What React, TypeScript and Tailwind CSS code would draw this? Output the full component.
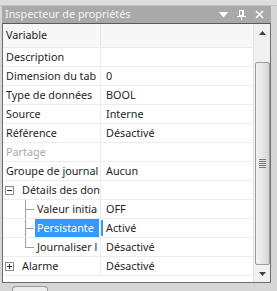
import React from "react";

const font = { fontFamily: '"Noto Sans", "Liberation Sans", sans-serif' };

type Row = {
  label: string;
  value?: string;
  disabled?: boolean;
  kind?: "plain" | "minus" | "plus" | "child" | "childLast";
  selected?: boolean;
};

const rows: Row[] = [
  { label: "Description" },
  { label: "Dimension du tab", value: "0" },
  { label: "Type de données", value: "BOOL" },
  { label: "Source", value: "Interne" },
  { label: "Référence", value: "Désactivé" },
  { label: "Partage", disabled: true },
  { label: "Groupe de journal", value: "Aucun" },
  { label: "Détails des don", kind: "minus" },
  { label: "Valeur initia", value: "OFF", kind: "child" },
  { label: "Persistante", value: "Activé", kind: "child", selected: true },
  { label: "Journaliser l", value: "Désactivé", kind: "childLast" },
  { label: "Alarme", value: "Désactivé", kind: "plus" },
];

function Box({ plus }: { plus?: boolean }) {
  return (
    <svg width="9" height="9" viewBox="0 0 9 9" className="shrink-0">
      <rect x="0.5" y="0.5" width="8" height="8" fill="#fff" stroke="#8c8c8c" />
      <line x1="2" y1="4.5" x2="7" y2="4.5" stroke="#333" />
      {plus && <line x1="4.5" y1="2" x2="4.5" y2="7" stroke="#333" />}
    </svg>
  );
}

function Connector({ last }: { last?: boolean }) {
  return (
    <svg width="32" height="19" viewBox="0 0 32 19" className="shrink-0">
      <line x1="22.5" y1="0" x2="22.5" y2={last ? 10 : 19} stroke="#a0a0a0" />
      <line x1="22.5" y1="9.5" x2="31" y2="9.5" stroke="#a0a0a0" />
    </svg>
  );
}

function PropRow({ r }: { r: Row }) {
  const kind = r.kind ?? "plain";
  return (
    <div className="flex h-[19px] border-b border-[#ececec]">
      <div className="w-[98px] shrink-0 border-r border-[#ececec] flex items-center overflow-hidden whitespace-nowrap">
        {kind === "plain" && (
          <span className={`pl-[3px] ${r.disabled ? "text-[#a8a8a8]" : "text-[#1e1e1e]"}`}>{r.label}</span>
        )}
        {(kind === "minus" || kind === "plus") && (
          <>
            <span className="pl-[2px] flex items-center">
              <Box plus={kind === "plus"} />
            </span>
            <span className="pl-[8px] text-[#1e1e1e]">{r.label}</span>
          </>
        )}
        {(kind === "child" || kind === "childLast") && (
          <>
            <Connector last={kind === "childLast"} />
            {r.selected ? (
              <span className="h-[18px] flex items-center bg-[#3399ff] text-white pl-[2px] pr-[5px]">{r.label}</span>
            ) : (
              <span className="pl-[2px] text-[#1e1e1e]">{r.label}</span>
            )}
          </>
        )}
      </div>
      <div className="flex-1 flex items-center whitespace-nowrap overflow-hidden">
        {r.selected ? (
          <span className="w-[2px] h-[16px] bg-[#3399ff]" />
        ) : (
          <span className="w-[2px]" />
        )}
        <span className="pl-[3px] text-[#1e1e1e]">{r.value ?? ""}</span>
      </div>
    </div>
  );
}

function Scrollbar() {
  return (
    <div className="w-[17px] shrink-0 bg-[#f0f0f0] border-l border-[#e4e4e4] flex flex-col items-center">
      <div className="h-[17px] w-full flex items-center justify-center">
        <svg width="7" height="4" viewBox="0 0 7 4">
          <polygon points="0,4 3.5,0 7,4" fill="#404040" />
        </svg>
      </div>
      <div className="h-[21px]" />
      <div className="w-[15px] flex-1 rounded-[2px] border border-[#9c9c9c] bg-gradient-to-r from-[#f2f2f2] via-[#e6e6e6] to-[#d4d4d4] flex items-center justify-center">
        <svg width="7" height="9" viewBox="0 0 7 9">
          <line x1="0" y1="0.5" x2="7" y2="0.5" stroke="#7a7a7a" />
          <line x1="0" y1="2.5" x2="7" y2="2.5" stroke="#7a7a7a" />
          <line x1="0" y1="4.5" x2="7" y2="4.5" stroke="#7a7a7a" />
          <line x1="0" y1="6.5" x2="7" y2="6.5" stroke="#7a7a7a" />
          <line x1="0" y1="8.5" x2="7" y2="8.5" stroke="#7a7a7a" />
        </svg>
      </div>
      <div className="h-[17px] w-full flex items-center justify-center">
        <svg width="7" height="4" viewBox="0 0 7 4">
          <polygon points="0,0 7,0 3.5,4" fill="#404040" />
        </svg>
      </div>
    </div>
  );
}

export default function App() {
  return (
    <div className="w-[277px] h-[291px] bg-[#d6d6d6] flex flex-col text-[10.8px] leading-none overflow-hidden" style={font}>
      <div className="h-[6px] border-b border-[#c4c4c4] bg-[#dcdcdc]" />
      <div className="flex flex-col mx-[2px] mr-[6px] flex-1 min-h-0">
        <div className="h-[17px] bg-[#a9a9a9] flex items-center px-[3px] text-[#f4f4f4]">
          <span className="flex-1">Inspecteur de propriétés</span>
          <div className="flex items-center gap-[9px] pr-[4px]">
            <svg width="9" height="6" viewBox="0 0 9 6">
              <polygon points="0,0 9,0 4.5,5.5" fill="#fff" />
            </svg>
            <svg width="9" height="10" viewBox="0 0 9 10">
              <rect x="2.5" y="0.5" width="4" height="5" fill="none" stroke="#fff" />
              <line x1="5.5" y1="0.5" x2="5.5" y2="5.5" stroke="#fff" />
              <line x1="0" y1="6.5" x2="9" y2="6.5" stroke="#fff" />
              <line x1="4.5" y1="6.5" x2="4.5" y2="10" stroke="#fff" />
            </svg>
            <svg width="9" height="9" viewBox="0 0 9 9">
              <line x1="1" y1="1" x2="8" y2="8" stroke="#fff" strokeWidth="1.6" />
              <line x1="8" y1="1" x2="1" y2="8" stroke="#fff" strokeWidth="1.6" />
            </svg>
          </div>
        </div>
        <div className="h-[260px] bg-white border border-[#6e6e6e] border-t-[#5a5a5a] flex">
          <div className="flex-1 flex flex-col">
            <div className="flex h-[24px] bg-[#f7f7f7] border-b border-[#ececec]">
              <div className="w-[98px] border-r border-[#e4e4e4] flex items-center pl-[3px] text-[#1e1e1e]">Variable</div>
              <div className="flex-1" />
            </div>
            {rows.map((r) => (
              <PropRow key={r.label} r={r} />
            ))}
          </div>
          <Scrollbar />
        </div>
        <div className="flex-1 flex items-end pl-[10px]">
          <div className="w-[36px] h-[5px] border border-b-0 border-[#9a9a9a] rounded-t-[4px] bg-[#ececec]" />
        </div>
      </div>
    </div>
  );
}
